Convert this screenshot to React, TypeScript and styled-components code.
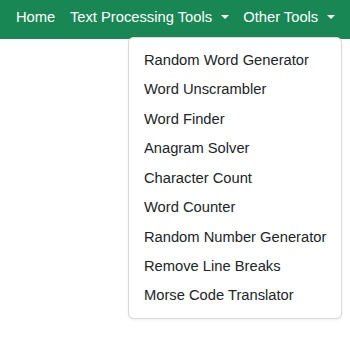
import React from "react";
import styled, { createGlobalStyle } from "styled-components";

const GlobalStyle = createGlobalStyle`
  html, body {
    margin: 0;
    padding: 0;
    background: #ffffff;
  }
  body {
    min-height: 339px;
    font-family: "Liberation Sans", Arial, sans-serif;
    font-size: 14.72px;
    line-height: 22.08px;
    color: #212529;
  }
  #root { min-height: 339px; }
  * { box-sizing: border-box; }
`;

const Navbar = styled.nav`
  position: relative;
  display: flex;
  align-items: flex-start;
  height: 39px;
  padding: 0 0 0 8.6px;
  background: #198754;
`;

const NavList = styled.ul`
  display: flex;
  list-style: none;
  margin: 0;
  padding: 0;
`;

const NavItem = styled.li`
  position: relative;
`;

const NavLink = styled.a<{ $toggle?: boolean }>`
  display: flex;
  align-items: center;
  padding: 5.8px 7.36px 7.36px;
  color: #ffffff;
  text-decoration: none;
  white-space: nowrap;
  cursor: pointer;
  &::after {
    content: "";
    display: ${(p) => (p.$toggle ? "inline-block" : "none")};
    margin-left: 8.5px;
    margin-top: 1px;
    border-top: 4.4px solid #ffffff;
    border-left: 4.4px solid transparent;
    border-right: 4.4px solid transparent;
    border-bottom: 0;
  }
`;

const Menu = styled.div`
  position: absolute;
  top: 37px;
  right: 0;
  z-index: 10;
  display: flex;
  flex-direction: column;
  padding: 7.36px 0;
  background: #ffffff;
  border: 1px solid rgba(0, 0, 0, 0.15);
  border-radius: 5.5px;
  box-shadow: 0 1px 3px rgba(0, 0, 0, 0.06);
  min-width: 147px;
`;

const MenuItem = styled.a`
  display: block;
  padding: 3.68px 14.72px;
  color: #212529;
  text-decoration: none;
  white-space: nowrap;
  cursor: pointer;
`;

const otherTools = [
  "Random Word Generator",
  "Word Unscrambler",
  "Word Finder",
  "Anagram Solver",
  "Character Count",
  "Word Counter",
  "Random Number Generator",
  "Remove Line Breaks",
  "Morse Code Translator",
];

export default function App() {
  return (
    <>
      <GlobalStyle />
      <Navbar>
        <NavList>
          <NavItem>
            <NavLink>Home</NavLink>
          </NavItem>
          <NavItem>
            <NavLink $toggle>Text Processing Tools</NavLink>
          </NavItem>
          <NavItem>
            <NavLink $toggle>Other Tools</NavLink>
            <Menu>
              {otherTools.map((t) => (
                <MenuItem key={t}>{t}</MenuItem>
              ))}
            </Menu>
          </NavItem>
        </NavList>
      </Navbar>
    </>
  );
}
